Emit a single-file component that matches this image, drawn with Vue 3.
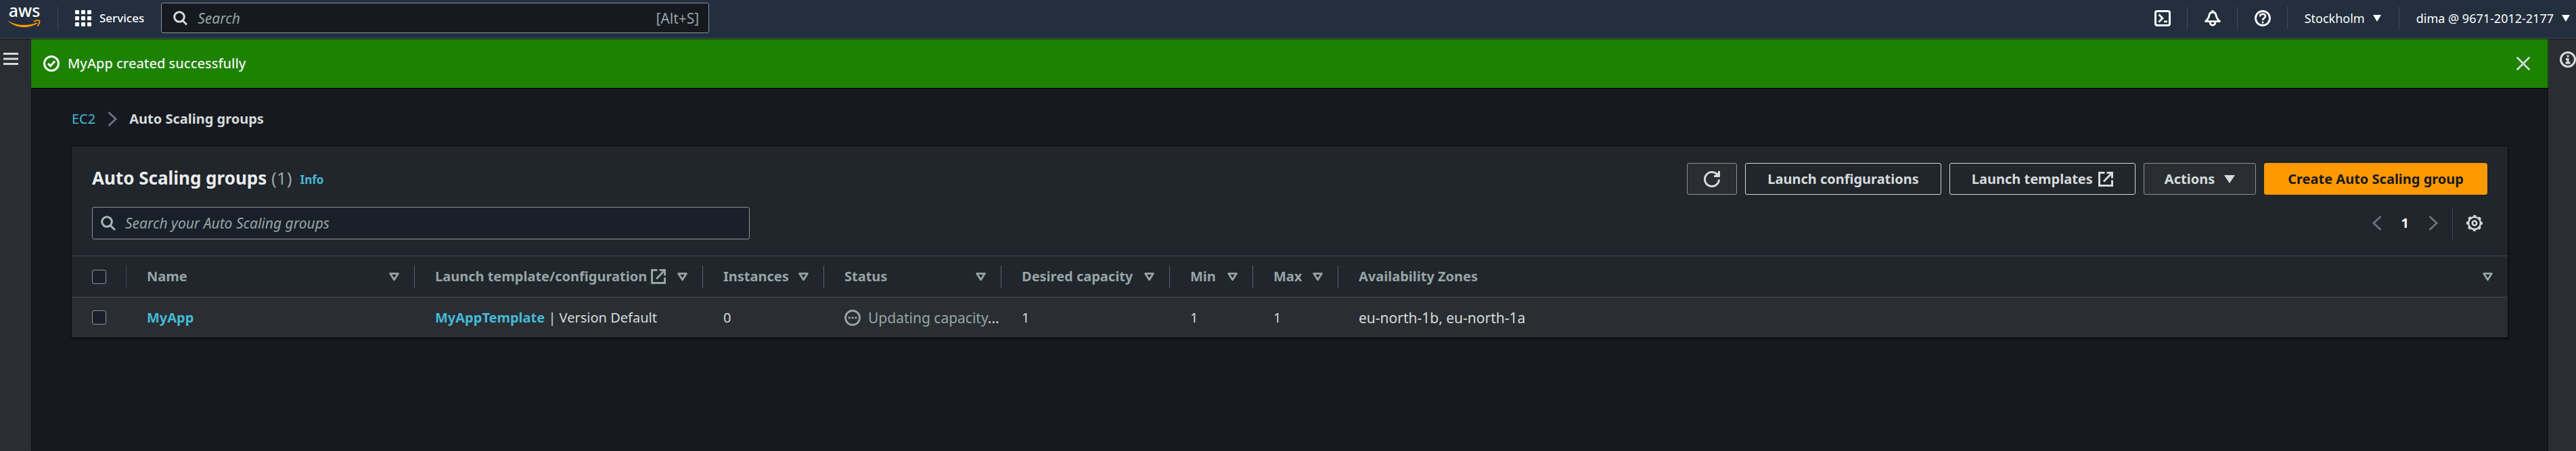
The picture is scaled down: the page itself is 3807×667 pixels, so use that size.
<script setup>
import { ref } from 'vue'

const globalSearch = ref('')
const groupSearch = ref('')

const columns = [
  { key: 'name', label: 'Name' },
  { key: 'template', label: 'Launch template/configuration', external: true },
  { key: 'instances', label: 'Instances' },
  { key: 'status', label: 'Status' },
  { key: 'desired', label: 'Desired capacity' },
  { key: 'min', label: 'Min' },
  { key: 'max', label: 'Max' },
  { key: 'zones', label: 'Availability Zones' },
]

const groups = [
  {
    name: 'MyApp',
    template: 'MyAppTemplate',
    version: 'Version Default',
    instances: 0,
    status: 'Updating capacity',
    desired: 1,
    min: 1,
    max: 1,
    zones: 'eu-north-1b, eu-north-1a',
  },
]
</script>

<template>
  <div class="console">
    <header class="topbar">
      <a class="logo" href="#" aria-label="AWS home">
        <span class="logo-text">aws</span>
        <svg width="48" height="12" viewBox="0 0 48 12">
          <path d="M0.500 2C13 9.500 29 9.800 42.500 4.200l.8 1.200C31 13.500 12 13.500 0.200 2.600z" fill="#f90" />
          <path d="M38.500 2.600c3-1.400 6.500-1.500 8-.8.4 2.200-.8 5-2.800 7.200" fill="none" stroke="#f90" stroke-width="1.800" stroke-linecap="round" stroke-linejoin="round" />
        </svg>
      </a>
      <span class="bar-divider"></span>
      <button type="button" class="bar-button services">
        <svg width="24" height="24" viewBox="0 0 24 24" fill="#fff">
          <template v-for="y in [0, 9, 18]" :key="y">
            <rect v-for="x in [0, 9, 18]" :key="x" :x="x" :y="y" width="6" height="6" rx="1" />
          </template>
        </svg>
        <span>Services</span>
      </button>
      <label class="global-search">
        <svg width="21" height="22" viewBox="0 0 21 22" fill="none" stroke="#d5dbdb" stroke-width="3">
          <circle cx="9" cy="9" r="7.3" />
          <path d="M14 14.5l6 6" />
        </svg>
        <input v-model="globalSearch" type="text" placeholder="Search" aria-label="Search" />
        <span class="shortcut">[Alt+S]</span>
      </label>

      <nav class="bar-tools" aria-label="Account tools">
        <button type="button" class="bar-button icon-tool" aria-label="CloudShell">
          <svg width="24" height="24" viewBox="0 0 24 24" fill="none" stroke="#fff" stroke-width="3">
            <rect x="1.5" y="1.5" width="21" height="21" rx="2.5" />
            <path d="M6.500 6.500l5.500 5.500-5.500 5.500M14 16.800h5" stroke-width="2.800" />
          </svg>
        </button>
        <span class="bar-divider"></span>
        <button type="button" class="bar-button icon-tool" aria-label="Notifications">
          <svg width="24" height="24" viewBox="0 0 24 24" fill="none" stroke="#fff" stroke-width="2.8" stroke-linejoin="round">
            <path d="M1.500 16.600C5 13.500 6.500 10.500 7 7.500 7.500 4.300 9.500 3 12 3s4.500 1.300 5 4.500c.5 3 2 6 5.500 9.100z" />
            <path d="M12 0v3M8.200 17v1.500c0 5 7.600 5 7.600 0V17" />
          </svg>
        </button>
        <span class="bar-divider"></span>
        <button type="button" class="bar-button icon-tool" aria-label="Help">
          <svg width="24" height="24" viewBox="0 0 24 24" fill="none" stroke="#fff" stroke-width="2.800">
            <circle cx="12" cy="12" r="10.500" />
            <path d="M8 9.500c0-5 8-5 8-.5 0 2.800-4 2.500-4 6M12 16.800v2.700" stroke-width="2.500" />
          </svg>
        </button>
        <span class="bar-divider"></span>
        <button type="button" class="bar-button menu">
          <span>Stockholm</span>
          <svg width="12" height="10" viewBox="0 0 12 10" fill="#fff"><path d="M0 0h12L6 10z" /></svg>
        </button>
        <span class="bar-divider"></span>
        <button type="button" class="bar-button menu account">
          <span>dima @ 9671-2012-2177</span>
          <svg width="12" height="10" viewBox="0 0 12 10" fill="#fff"><path d="M0 0h12L6 10z" /></svg>
        </button>
      </nav>
    </header>

    <div class="body">
      <aside class="rail rail-left">
        <button type="button" class="rail-button" aria-label="Open navigation">
          <svg width="22" height="24" viewBox="0 0 22 24" stroke="#d5dbdb" stroke-width="3">
            <path d="M0 4.500h22M0 12h22M0 19.500h22" />
          </svg>
        </button>
      </aside>

      <main class="content">
        <div class="flash" role="status">
          <svg width="24" height="24" viewBox="0 0 24 24" fill="none" stroke="#fff" stroke-width="3">
            <circle cx="12" cy="12" r="10.500" />
            <path d="M7 12l3.500 3.500 6.500-7" />
          </svg>
          <span class="flash-text">MyApp created successfully</span>
          <button type="button" class="flash-close" aria-label="Dismiss">
            <svg width="20" height="20" viewBox="0 0 20 20" stroke="#d5dbdb" stroke-width="2.800" stroke-linecap="round">
              <path d="M1.500 1.500l17 17M18.500 1.500l-17 17" />
            </svg>
          </button>
        </div>

        <div class="page">
          <nav class="crumbs" aria-label="Breadcrumb">
            <a href="#">EC2</a>
            <svg width="14" height="22" viewBox="0 0 14 22" fill="none" stroke="#687078" stroke-width="3">
              <path d="M1.500 1l10.500 10L1.500 21" />
            </svg>
            <span class="crumb-current">Auto Scaling groups</span>
          </nav>

          <section class="panel">
            <div class="panel-head">
              <div class="title-row">
                <h1>Auto Scaling groups <span class="count">(1)</span></h1>
                <a class="info" href="#">Info</a>
                <div class="actions">
                  <button type="button" class="btn btn-filled btn-icon" aria-label="Refresh">
                    <svg width="24" height="24" viewBox="0 0 24 24" fill="none" stroke="#d5dbdb" stroke-width="3">
                      <path d="M22.500 12.500A10.500 10.500 0 1 1 20 5.200" />
                      <path d="M22.500 0v7.500H15" />
                      <path d="M17.500 7.500l4-4z" />
                    </svg>
                  </button>
                  <a class="btn" href="#">Launch configurations</a>
                  <a class="btn" href="#">
                    Launch templates
                    <svg width="22" height="22" viewBox="0 0 22 22" fill="none" stroke="#d5dbdb" stroke-width="3">
                      <path d="M9.500 1.500h-8v19h19v-8M12.500 1.500h8v8M20 2L8 14.500" />
                    </svg>
                  </a>
                  <button type="button" class="btn btn-filled btn-menu">
                    Actions
                    <svg width="16" height="12" viewBox="0 0 16 12" fill="#d5dbdb"><path d="M0 0h16L8 12z" /></svg>
                  </button>
                  <button type="button" class="btn btn-primary">Create Auto Scaling group</button>
                </div>
              </div>

              <div class="filter-row">
                <label class="filter">
                  <svg width="22" height="22" viewBox="0 0 22 22" fill="none" stroke="#aab7b8" stroke-width="3">
                    <circle cx="9" cy="9" r="7.300" />
                    <path d="M14 14.500l7 6.500" />
                  </svg>
                  <input
                    v-model="groupSearch"
                    type="text"
                    placeholder="Search your Auto Scaling groups"
                    aria-label="Search your Auto Scaling groups"
                  />
                </label>
                <div class="pager">
                  <button type="button" aria-label="Previous page">
                    <svg width="14" height="22" viewBox="0 0 14 22" fill="none" stroke="#687078" stroke-width="3">
                      <path d="M12.500 1L2 11l10.500 10" />
                    </svg>
                  </button>
                  <button type="button" class="page-number">1</button>
                  <button type="button" aria-label="Next page">
                    <svg width="14" height="22" viewBox="0 0 14 22" fill="none" stroke="#687078" stroke-width="3">
                      <path d="M1.500 1L12 11 1.500 21" />
                    </svg>
                  </button>
                </div>
                <button type="button" class="settings" aria-label="Preferences">
                  <svg width="24" height="24" viewBox="0 0 24 24" fill="none" stroke="#d5dbdb">
                    <circle cx="12" cy="12" r="9" stroke-width="2.600" />
                    <circle cx="12" cy="12" r="10.800" stroke-width="2.400" stroke-dasharray="4.200 4.280" stroke-dashoffset="2.100" />
                    <circle cx="12" cy="12" r="3.200" stroke-width="2.600" />
                  </svg>
                </button>
              </div>
            </div>

            <table>
              <colgroup>
                <col class="col-check" />
                <col v-for="c in columns" :key="c.key" :class="`col-${c.key}`" />
              </colgroup>
              <thead>
                <tr>
                  <th scope="col">
                    <div class="head-cell head-check">
                      <input type="checkbox" aria-label="Select all groups" />
                    </div>
                  </th>
                  <th v-for="c in columns" :key="c.key" scope="col">
                    <div class="head-cell">
                      <span>{{ c.label }}</span>
                      <svg v-if="c.external" class="head-link" width="22" height="22" viewBox="0 0 22 22" fill="none" stroke="#95a5a6" stroke-width="3">
                        <path d="M9.500 1.500h-8v19h19v-8M12.500 1.500h8v8M20 2L8 14.500" />
                      </svg>
                      <button type="button" class="sort" :aria-label="`Sort by ${c.label}`">
                        <svg width="15" height="13" viewBox="0 0 15 13" fill="none" stroke="#95a5a6" stroke-width="2.800" stroke-linejoin="round">
                          <path d="M1.600 1.600h11.800l-5.900 9.200z" />
                        </svg>
                      </button>
                    </div>
                  </th>
                </tr>
              </thead>
              <tbody>
                <tr v-for="g in groups" :key="g.name">
                  <td><input type="checkbox" :aria-label="`Select ${g.name}`" /></td>
                  <td><a class="strong" href="#">{{ g.name }}</a></td>
                  <td><a class="strong" href="#">{{ g.template }}</a> | {{ g.version }}</td>
                  <td>{{ g.instances }}</td>
                  <td>
                    <div class="status">
                      <svg width="24" height="24" viewBox="0 0 24 24" fill="none" stroke="#95a5a6" stroke-width="2.800">
                        <circle cx="12" cy="12" r="10.500" />
                        <path d="M5.800 12h12.400" stroke-dasharray="2.800 2" />
                      </svg>
                      <span>{{ g.status }}<span class="dots">...</span></span>
                    </div>
                  </td>
                  <td>{{ g.desired }}</td>
                  <td>{{ g.min }}</td>
                  <td>{{ g.max }}</td>
                  <td class="zones">{{ g.zones }}</td>
                </tr>
              </tbody>
            </table>
          </section>
        </div>
      </main>

      <aside class="rail rail-right">
        <button type="button" class="rail-button" aria-label="Open help panel">
          <svg width="24" height="24" viewBox="0 0 24 24" fill="none" stroke="#d5dbdb" stroke-width="3">
            <circle cx="12" cy="12" r="10.500" />
            <path d="M12 5.500v3M9 11.500h3v5M8.500 17h7" />
          </svg>
        </button>
      </aside>
    </div>
  </div>
</template>

<style>
body {
  background: #16191f;
}
</style>

<style scoped>
.console {
  display: flex;
  flex-direction: column;
  min-height: 100vh;
  background: #16191f;
  color: #d5dbdb;
  font-family: "Noto Sans", "Open Sans", sans-serif;
  font-size: 20px;
  line-height: 30px;
}
.console * {
  box-sizing: border-box;
}
svg {
  display: block;
  flex: none;
}
button,
input {
  font: inherit;
  color: inherit;
}
button {
  padding: 0;
  border: 0;
  background: none;
  cursor: pointer;
}
a {
  color: #44b9d6;
  text-decoration: none;
}
::placeholder {
  color: #95a5a6;
  font-style: italic;
  opacity: 1;
}

.topbar {
  display: flex;
  align-items: center;
  height: 57px;
  margin-bottom: 1px;
  padding: 0 9px 3px 12px;
  background: #232f3e;
  border-bottom: 1px solid #545b64;
  color: #fff;
}
.logo {
  display: flex;
  flex-direction: column;
  align-items: center;
  margin-right: 25px;
  padding-bottom: 12px;
}
.logo-text {
  color: #fff;
  font-size: 25px;
  font-weight: 500;
  line-height: 28px;
}
.bar-divider {
  flex: none;
  width: 1px;
  height: 34px;
  background: #414d5c;
}
.bar-button {
  display: flex;
  align-items: center;
  font-size: 18px;
  line-height: 24px;
  white-space: nowrap;
}
.services {
  gap: 12px;
  padding: 0 25px;
  font-size: 17px;
  font-weight: 500;
}
.global-search {
  display: flex;
  align-items: center;
  width: 810px;
  height: 45px;
  padding: 0 14px 0 17px;
  gap: 15px;
  background: #16191f;
  border: 1px solid #879596;
  border-radius: 3px;
  font-size: 21px;
}
.global-search input,
.filter input {
  flex: 1;
  min-width: 0;
  padding: 0;
  border: 0;
  outline: 0;
  background: none;
}
.shortcut {
  color: #95a5a6;
}
.bar-tools {
  display: flex;
  align-items: center;
  margin-left: auto;
}
.icon-tool {
  padding: 0 24px 0 25px;
}
.menu {
  gap: 12px;
  padding: 0 26px 0 25px;
}
.account {
  padding-right: 0;
}

.body {
  display: flex;
  flex: 1;
}
.rail {
  flex: none;
  background: #2a2e33;
  box-shadow: 0 0 2px #000;
}
.rail-left {
  width: 46px;
  padding: 17px 5px;
}
.rail-right {
  width: 41px;
  padding: 18px 0 0 17px;
}
.content {
  flex: 1;
  min-width: 0;
}
.flash {
  display: flex;
  align-items: center;
  gap: 12px;
  height: 72px;
  padding: 0 27px 0 18px;
  background: #1d8102;
  box-shadow: 0 1px 1px rgba(0, 0, 0, 0.8);
  color: #f2f3f3;
}
.flash-text {
  font-weight: 500;
}
.flash-close {
  margin-left: auto;
}
.page {
  padding: 31px 60px 60px;
}
.crumbs {
  display: flex;
  align-items: center;
  gap: 18px;
}
.crumb-current {
  font-weight: 700;
}

.panel {
  margin-top: 26px;
  background: #21252c;
  border-top: 1px solid #2a2e33;
  box-shadow: 0 1px 2px 1px rgba(0, 0, 0, 0.6);
}
.panel-head {
  padding: 23px 30px 24px;
}
.title-row {
  display: flex;
  align-items: center;
}
h1 {
  margin: 0;
  padding-bottom: 4px;
  font-size: 26px;
  line-height: 36px;
  font-weight: 700;
  color: #eaeded;
}
.count {
  font-weight: 400;
  color: #95a5a6;
}
.info {
  margin-left: 12px;
  padding-top: 2px;
  font-size: 17px;
  line-height: 24px;
  font-weight: 700;
}
.actions {
  display: flex;
  gap: 12px;
  margin-left: auto;
}
.btn {
  display: flex;
  align-items: center;
  gap: 8px;
  height: 47px;
  padding: 0 32px;
  border: 1px solid #d5dbdb;
  border-radius: 3px;
  color: #d5dbdb;
  font-weight: 700;
  white-space: nowrap;
}
.btn-filled {
  background: #2a2e33;
  border-color: #879596;
}
.btn-icon {
  padding: 0 24px;
}
.btn-menu {
  gap: 14px;
  padding: 0 30px;
}
.btn-primary {
  padding: 0 34px;
  border-color: #f90;
  background: #f90;
  color: #16191f;
}

.filter-row {
  display: flex;
  align-items: center;
  margin-top: 18px;
}
.filter {
  display: flex;
  align-items: center;
  gap: 14px;
  width: 972px;
  height: 48px;
  padding: 0 12px;
  background: #1a2029;
  border: 1px solid #879596;
  border-radius: 3px;
  font-size: 21px;
}
.pager {
  display: flex;
  align-items: center;
  gap: 29px;
  margin-left: auto;
  padding-right: 21px;
}
.page-number {
  font-weight: 700;
  color: #fff;
}
.settings {
  display: flex;
  align-items: center;
  height: 47px;
  padding: 0 7px 0 20px;
  border-left: 1px solid #414750;
}

table {
  width: 100%;
  table-layout: fixed;
  border-collapse: separate;
  border-spacing: 0;
}
.col-check {
  width: 81px;
}
.col-name,
.col-template {
  width: 426px;
}
.col-instances {
  width: 179px;
}
.col-status {
  width: 262px;
}
.col-desired {
  width: 249px;
}
.col-min {
  width: 123px;
}
.col-max {
  width: 126px;
}
th {
  height: 62px;
  padding: 0;
  border-top: 1px solid #414750;
  border-bottom: 1px solid #414750;
  color: #95a5a6;
  font-weight: 700;
  text-align: left;
  white-space: nowrap;
}
.head-cell {
  display: flex;
  align-items: center;
  height: 33px;
  padding: 0 22px 0 30px;
  border-right: 1px solid #5c636b;
}
.head-check {
  padding-right: 0;
  border-color: #414750;
}
th:last-child .head-cell {
  border-right: 0;
}
.head-link {
  margin-left: 6px;
}
.sort {
  margin-left: auto;
}
td {
  height: 59px;
  padding: 0 0 0 30px;
  background: #2a2e33;
  white-space: nowrap;
}
.strong {
  font-weight: 700;
}
.status {
  display: flex;
  align-items: center;
  gap: 11px;
  font-size: 21px;
  color: #95a5a6;
}
.zones {
  font-size: 21px;
}
.dots {
  color: #d5dbdb;
}
input[type="checkbox"] {
  appearance: none;
  display: block;
  width: 21px;
  height: 21px;
  margin: 0;
  background: #1a2029;
  border: 1px solid #879596;
  border-radius: 3px;
}
input[type="checkbox"]:checked {
  background: #44b9d6;
}
</style>
